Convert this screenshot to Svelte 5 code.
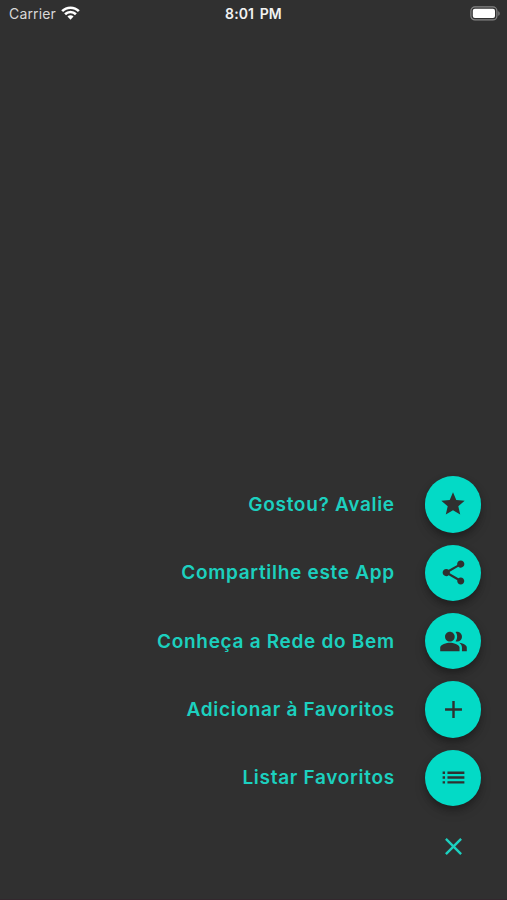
<script lang="ts">
	const actions = [
		{ label: 'Gostou? Avalie', icon: 'star' },
		{ label: 'Compartilhe este App', icon: 'share' },
		{ label: 'Conheça a Rede do Bem', icon: 'people' },
		{ label: 'Adicionar à Favoritos', icon: 'add' },
		{ label: 'Listar Favoritos', icon: 'list' }
	];

	const icons: Record<string, string> = {
		star: 'M12 17.27L18.18 21l-1.64-7.03L22 9.24l-7.19-.61L12 2 9.19 8.63 2 9.24l5.46 4.73L5.82 21z',
		share:
			'M18 16.08c-.76 0-1.44.3-1.96.77L8.91 12.7c.05-.23.09-.46.09-.7s-.04-.47-.09-.7l7.05-4.11c.54.5 1.25.81 2.04.81 1.66 0 3-1.34 3-3s-1.34-3-3-3-3 1.34-3 3c0 .24.04.47.09.7L8.04 9.81C7.5 9.31 6.79 9 6 9c-1.66 0-3 1.34-3 3s1.34 3 3 3c.79 0 1.5-.31 2.04-.81l7.12 4.16c-.05.21-.08.43-.08.65 0 1.61 1.31 2.92 2.92 2.92s2.92-1.31 2.92-2.92-1.31-2.92-2.92-2.92z',
		people:
			'M16.67 13.13C18.04 14.06 19 15.32 19 17v3h4v-3c0-2.18-3.57-3.47-6.33-3.87zM15 12c2.21 0 4-1.79 4-4s-1.79-4-4-4c-.47 0-.91.1-1.33.24C14.5 5.27 15 6.58 15 8s-.5 2.73-1.33 3.76c.42.14.86.24 1.33.24zM9 12c2.21 0 4-1.79 4-4s-1.79-4-4-4-4 1.79-4 4 1.79 4 4 4zM9 13c-2.67 0-8 1.34-8 4v3h16v-3c0-2.66-5.33-4-8-4z',
		add: 'M19 13h-6v6h-2v-6H5v-2h6V5h2v6h6v2z',
		list: 'M3 13h2v-2H3v2zm0 4h2v-2H3v2zm0-8h2V7H3v2zm4 4h14v-2H7v2zm0 4h14v-2H7v2zM7 7v2h14V7H7z',
		close:
			'M19 6.41L17.59 5 12 10.59 6.41 5 5 6.41 10.59 12 5 17.59 6.41 19 12 13.41 17.59 19 19 17.59 13.41 12z'
	};
</script>

<div class="screen">
	<header class="status-bar">
		<div class="carrier">
			<span>Carrier</span>
			<svg class="wifi" viewBox="0 0 20 14">
				<path d="M1.2 5.1a12.4 12.4 0 0 1 17.6 0" />
				<path d="M4.3 8.3a8 8 0 0 1 11.4 0" />
				<path class="dot" d="M10 14L6.8 10.8a4.5 4.5 0 0 1 6.4 0z" />
			</svg>
		</div>
		<time>8:01 PM</time>
		<div class="status-right">
			<svg class="battery" viewBox="0 0 31 15">
				<rect class="case" x="0.9" y="0.9" width="26" height="13" rx="4" />
				<rect class="level" x="2.8" y="2.8" width="22.2" height="9.2" rx="2" />
				<path class="cap" d="M28.3 5.2c1.8.6 1.8 4 0 4.6z" />
			</svg>
		</div>
	</header>

	<div class="speed-dial">
		{#each actions as action}
			<div class="action">
				<span class="label">{action.label}</span>
				<button class="fab" aria-label={action.label}>
					<svg class="icon {action.icon}" viewBox="0 0 24 24"><path d={icons[action.icon]} /></svg>
				</button>
			</div>
		{/each}
		<button class="fab close" aria-label="Fechar">
			<svg class="icon" viewBox="0 0 24 24"><path d={icons.close} /></svg>
		</button>
	</div>
</div>

<style>
	:global(body) {
		background: #303030;
	}

	.screen {
		box-sizing: border-box;
		display: flex;
		flex-direction: column;
		justify-content: space-between;
		width: 507px;
		height: 900px;
		overflow: hidden;
		background: #303030;
		border-bottom: 1px solid #33272d;
		font-family: Inter, 'Liberation Sans', sans-serif;
	}

	.status-bar {
		display: grid;
		grid-template-columns: 1fr auto 1fr;
		align-items: center;
		height: 27px;
		padding: 0 6px 0 9px;
		color: #f2f2f2;
		font-size: 14px;
	}

	.carrier {
		display: flex;
		align-items: center;
		gap: 5px;
		color: #d8d8d8;
		letter-spacing: 0.15px;
	}

	.wifi {
		width: 19px;
		height: 14px;
		margin-top: -1px;
		fill: none;
		stroke: #fff;
		stroke-width: 2.7;
	}

	.wifi .dot {
		fill: #fff;
		stroke: none;
	}

	time {
		margin-right: 3px;
		font-weight: 600;
		letter-spacing: 0.1px;
		word-spacing: 2px;
	}

	.status-right {
		display: flex;
		justify-content: flex-end;
	}

	.battery {
		width: 31px;
		height: 15px;
	}

	.case {
		fill: none;
		stroke: #858585;
		stroke-width: 1.2;
	}

	.level {
		fill: #fff;
	}

	.cap {
		fill: #858585;
	}

	.speed-dial {
		display: flex;
		flex-direction: column;
		align-items: flex-end;
		gap: 12px;
		padding: 0 25.8px 24.5px 0;
	}

	.action {
		display: flex;
		align-items: center;
		gap: 30px;
	}

	.label {
		color: #1cd0bf;
		font-size: 19px;
		font-weight: 600;
		letter-spacing: 0.7px;
		white-space: nowrap;
	}

	.fab {
		display: flex;
		align-items: center;
		justify-content: center;
		width: 56.4px;
		height: 56.4px;
		padding: 0;
		border: none;
		border-radius: 50%;
		background: #03dac6;
		box-shadow:
			0 4px 6px rgba(0, 0, 0, 0.22),
			0 6px 12px rgba(0, 0, 0, 0.16);
		cursor: pointer;
	}

	.icon {
		width: 29px;
		height: 29px;
		fill: #303030;
	}

	.icon.star {
		width: 28px;
		height: 28px;
	}

	.close {
		background: transparent;
		box-shadow: none;
	}

	.close .icon {
		fill: #1cd0bf;
	}
</style>
